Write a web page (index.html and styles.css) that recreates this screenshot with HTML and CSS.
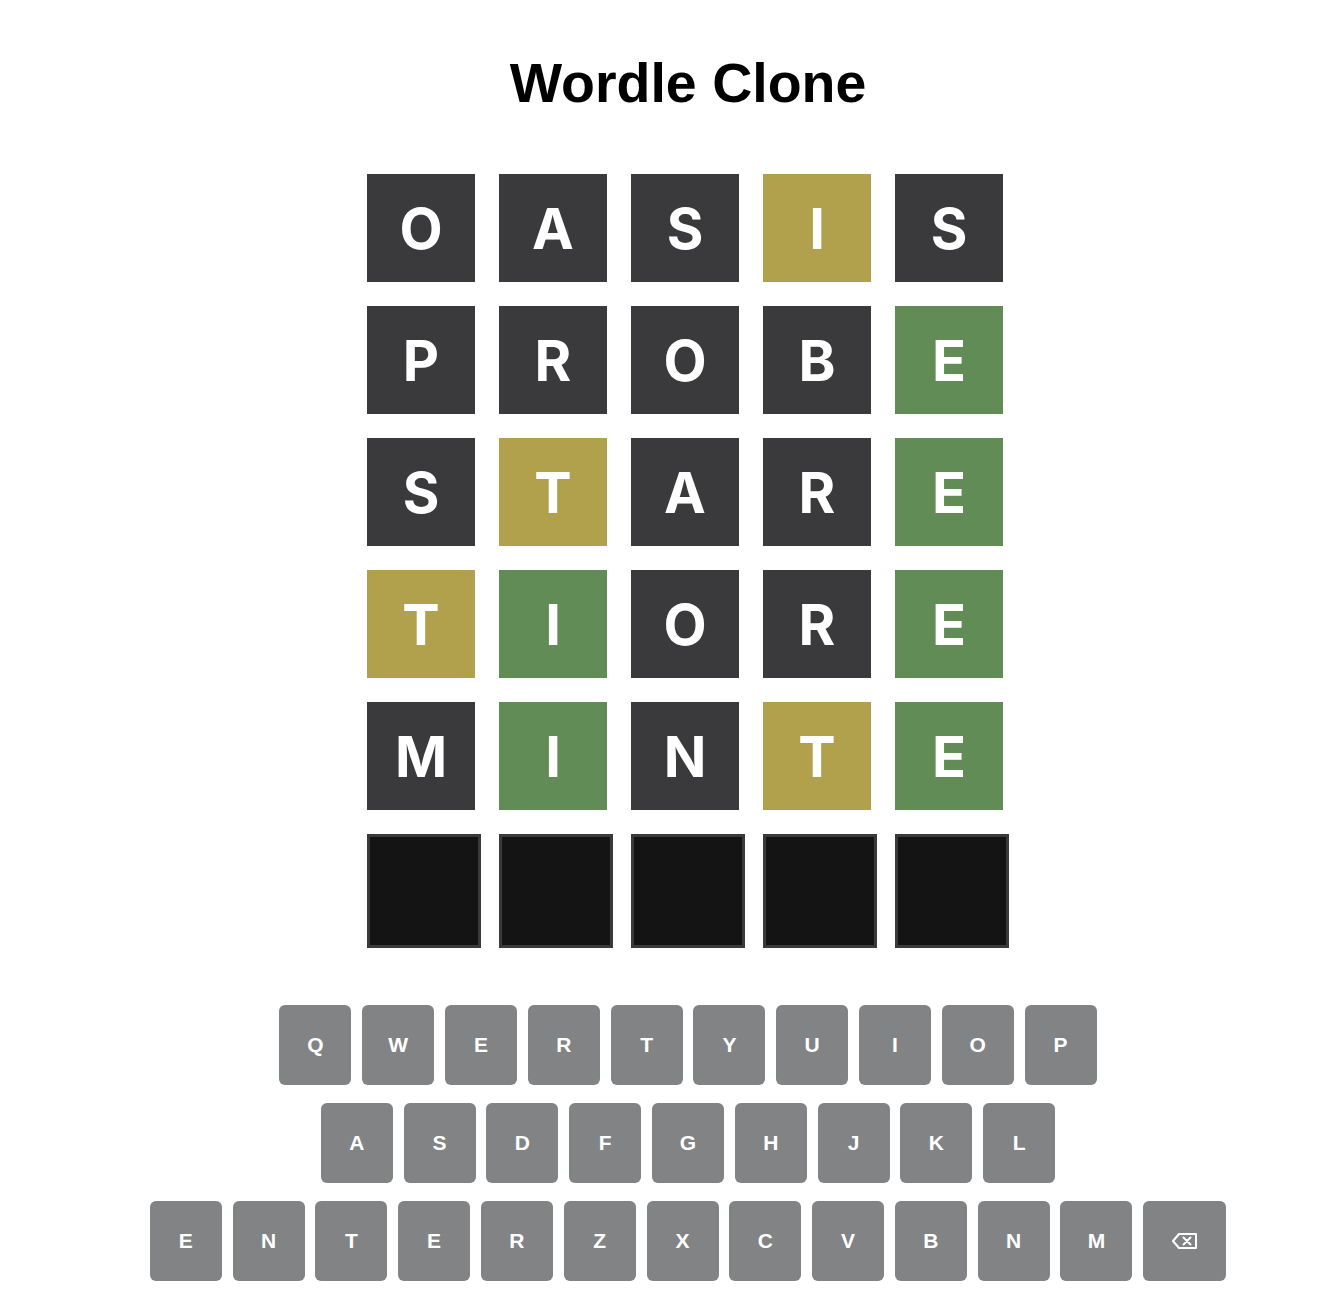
FILE: index.html
```html
<!DOCTYPE html>
<html lang="en">
  <head>
    <meta charset="UTF-8" />
    <meta name="viewport" content="width=device-width, initial-scale=1.0" />
    <title>Wordle Clone</title>
    <link rel="stylesheet" href="styles.css">
  </head>
  <body>
    <div class="app">
      <h1>Wordle Clone</h1>

      <div class="board">
        <div class="tile absent">O</div>
        <div class="tile absent">A</div>
        <div class="tile absent">S</div>
        <div class="tile present">I</div>
        <div class="tile absent">S</div>

        <div class="tile absent">P</div>
        <div class="tile absent">R</div>
        <div class="tile absent">O</div>
        <div class="tile absent">B</div>
        <div class="tile correct">E</div>

        <div class="tile absent">S</div>
        <div class="tile present">T</div>
        <div class="tile absent">A</div>
        <div class="tile absent">R</div>
        <div class="tile correct">E</div>

        <div class="tile present">T</div>
        <div class="tile correct">I</div>
        <div class="tile absent">O</div>
        <div class="tile absent">R</div>
        <div class="tile correct">E</div>

        <div class="tile absent">M</div>
        <div class="tile correct">I</div>
        <div class="tile absent">N</div>
        <div class="tile present">T</div>
        <div class="tile correct">E</div>

        <div class="tile empty"></div>
        <div class="tile empty"></div>
        <div class="tile empty"></div>
        <div class="tile empty"></div>
        <div class="tile empty"></div>
      </div>

      <div class="keyboard">
        <div class="key-row">
          <button class="key">Q</button>
          <button class="key">W</button>
          <button class="key">E</button>
          <button class="key">R</button>
          <button class="key">T</button>
          <button class="key">Y</button>
          <button class="key">U</button>
          <button class="key">I</button>
          <button class="key">O</button>
          <button class="key">P</button>
        </div>
        <div class="key-row">
          <button class="key">A</button>
          <button class="key">S</button>
          <button class="key">D</button>
          <button class="key">F</button>
          <button class="key">G</button>
          <button class="key">H</button>
          <button class="key">J</button>
          <button class="key">K</button>
          <button class="key">L</button>
        </div>
        <div class="key-row">
          <button class="key">E</button>
          <button class="key">N</button>
          <button class="key">T</button>
          <button class="key">E</button>
          <button class="key">R</button>
          <button class="key">Z</button>
          <button class="key">X</button>
          <button class="key">C</button>
          <button class="key">V</button>
          <button class="key">B</button>
          <button class="key">N</button>
          <button class="key">M</button>
          <button class="key key-wide" aria-label="Backspace">
            <svg width="28" height="20" viewBox="0 0 28 20" fill="none" stroke="#fff" stroke-width="2" stroke-linejoin="round">
              <path d="M8 3 H25 V17 H8 L2 10 Z" />
              <path d="M12.5 6.5 L19.5 13.5 M19.5 6.5 L12.5 13.5" stroke-linecap="round" />
            </svg>
          </button>
        </div>
      </div>
    </div>
  </body>
</html>
```

FILE: styles.css
```css
* {
  margin: 0;
  padding: 0;
  box-sizing: border-box;
}

body {
  background: #fff;
  color: #000;
  font-family: "Liberation Sans", Arial, sans-serif;
}

.app {
  display: flex;
  flex-direction: column;
  align-items: center;
  padding-left: 36px;
  padding-top: 52px;
}

h1 {
  font-size: 55.5px;
  font-weight: 700;
  line-height: 63px;
  margin-bottom: 59px;
}

.board {
  display: grid;
  grid-template-columns: repeat(5, 108px);
  gap: 24px;
  margin-right: 6px;
}

.tile {
  box-sizing: content-box;
  width: 108px;
  height: 106px;
  padding-top: 2px;
  display: flex;
  justify-content: center;
  align-items: center;
  color: #fff;
  font-family: Inter, "Noto Sans", sans-serif;
  font-size: 56px;
  font-weight: 700;
}

.absent {
  background: #3a3a3c;
}

.present {
  background: #b1a04c;
}

.correct {
  background: #618c55;
}

.empty {
  height: 108px;
  padding-top: 0;
  background: #141414;
  border: 3px solid #3a3a3c;
}

.keyboard {
  margin-top: 57px;
  display: flex;
  flex-direction: column;
  gap: 18px;
}

.key-row {
  display: flex;
  justify-content: center;
  gap: 10.8px;
}

.key {
  width: 72px;
  height: 80px;
  border: none;
  border-radius: 6px;
  background: #818384;
  color: #fff;
  font-family: "Liberation Sans", Arial, sans-serif;
  font-size: 21px;
  font-weight: 700;
  display: flex;
  justify-content: center;
  align-items: center;
  cursor: pointer;
}

.key-wide {
  width: 83px;
}
```
